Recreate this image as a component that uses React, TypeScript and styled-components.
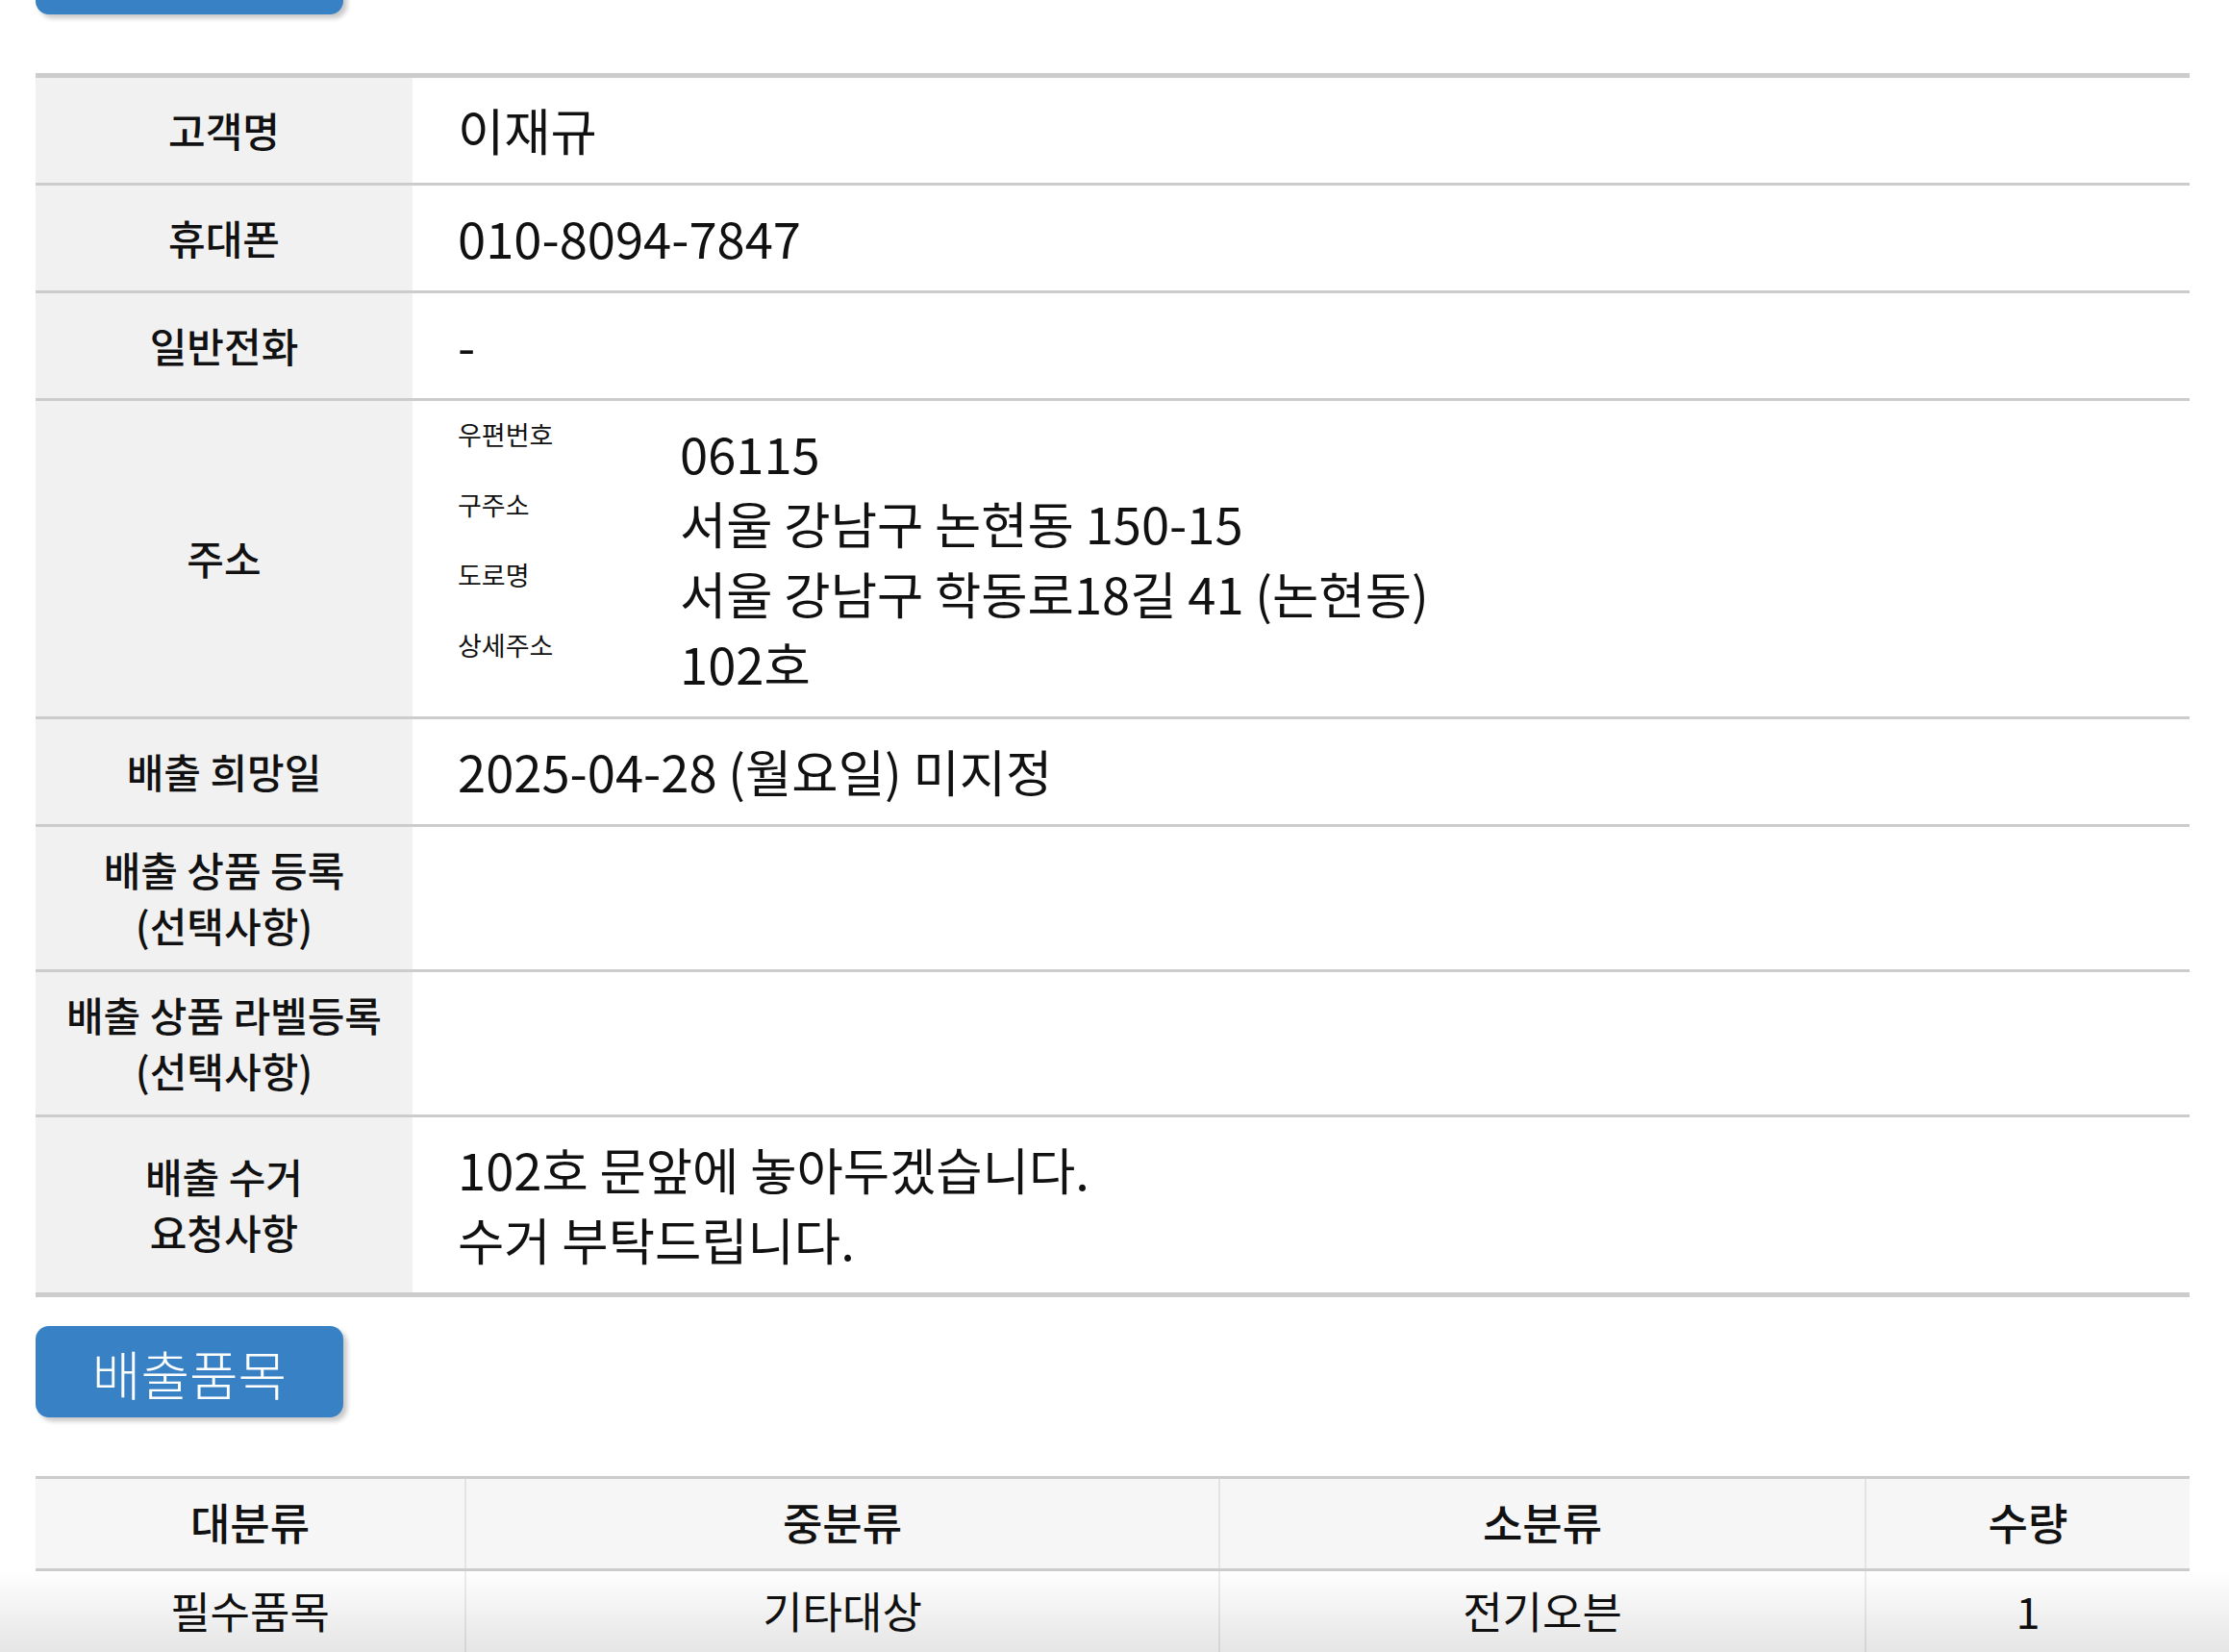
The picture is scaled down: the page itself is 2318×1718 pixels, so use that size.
import React from 'react';
import styled, { createGlobalStyle } from 'styled-components';

const GlobalStyle = createGlobalStyle`
  html, body {
    margin: 0;
    padding: 0;
    height: 100%;
    overflow: hidden;
    background: #fff;
  }
  body {
    font-family: "Noto Sans CJK KR", "Noto Sans", sans-serif;
    color: #111;
  }
`;

const Page = styled.div`
  padding: 0 41px 0 37px;
`;

const SectionTag = styled.div<{ $cut?: boolean }>`
  width: 320px;
  height: 95px;
  margin-top: ${p => (p.$cut ? '-80px' : '30px')};
  margin-bottom: 61px;
  border-radius: 14px;
  background: #3781c4;
  color: #fff;
  display: flex;
  align-items: center;
  justify-content: center;
  font-size: 55px;
  font-weight: 300;
  box-shadow: 4px 4px 5px rgba(0, 0, 0, 0.22);
`;

const InfoTable = styled.div`
  border-top: 5px solid #cccccc;
  border-bottom: 5px solid #cccccc;
`;

const InfoRow = styled.div`
  display: grid;
  grid-template-columns: 392px 1fr;
  border-bottom: 3px solid #cccccc;

  &:last-child {
    border-bottom: none;
  }
`;

const Label = styled.div`
  background: #f1f1f1;
  display: flex;
  align-items: center;
  justify-content: center;
  text-align: center;
  padding: 15px 10px 17px;
  font-size: 42px;
  font-weight: 500;
  line-height: 58px;
`;

const Value = styled.div`
  display: flex;
  flex-direction: column;
  justify-content: center;
  padding: 17px 47px 19px;
  font-size: 52.5px;
  line-height: 73px;
`;

const AddressGrid = styled.div`
  display: grid;
  grid-template-columns: 231px 1fr;
`;

const AddrLabel = styled.div`
  font-size: 27px;
  line-height: 36px;
  align-self: start;
`;

const AddrValue = styled.div`
  font-size: 52.5px;
  line-height: 73px;
`;

const ItemTable = styled.div`
  border-top: 3px solid #cccccc;
`;

const ItemRow = styled.div<{ $head?: boolean }>`
  display: grid;
  grid-template-columns: 20% 35% 30% 15%;
  height: ${p => (p.$head ? '93px' : '88px')};
  background: ${p => (p.$head ? '#f6f6f6' : '#fff')};
  border-bottom: ${p => (p.$head ? '3px solid #cccccc' : 'none')};
`;

const ItemCell = styled.div<{ $head?: boolean }>`
  display: flex;
  align-items: center;
  justify-content: center;
  padding-bottom: ${p => (p.$head ? '4px' : '8px')};
  font-size: 45px;
  font-weight: ${p => (p.$head ? 500 : 400)};
  border-right: 2px solid ${p => (p.$head ? '#e4e4e4' : '#ececec')};

  &:last-child {
    border-right: none;
  }
`;

const BottomFade = styled.div`
  position: fixed;
  left: 0;
  right: 0;
  bottom: 0;
  height: 86px;
  pointer-events: none;
  background: linear-gradient(to bottom, rgba(0, 0, 0, 0), rgba(0, 0, 0, 0.1));
`;

const address = [
  ['우편번호', '06115'],
  ['구주소', '서울 강남구 논현동 150-15'],
  ['도로명', '서울 강남구 학동로18길 41 (논현동)'],
  ['상세주소', '102호'],
];

const items = [['필수품목', '기타대상', '전기오븐', '1']];

export default function App() {
  return (
    <Page>
      <GlobalStyle />
      {/* previous section tag, scrolled mostly out of view */}
      <SectionTag $cut />

      <InfoTable>
        <InfoRow>
          <Label>고객명</Label>
          <Value>이재규</Value>
        </InfoRow>
        <InfoRow>
          <Label>휴대폰</Label>
          <Value>010-8094-7847</Value>
        </InfoRow>
        <InfoRow>
          <Label>일반전화</Label>
          <Value>-</Value>
        </InfoRow>
        <InfoRow>
          <Label>주소</Label>
          <Value>
            <AddressGrid>
              {address.map(([k, v]) => (
                <React.Fragment key={k}>
                  <AddrLabel>{k}</AddrLabel>
                  <AddrValue>{v}</AddrValue>
                </React.Fragment>
              ))}
            </AddressGrid>
          </Value>
        </InfoRow>
        <InfoRow>
          <Label>배출 희망일</Label>
          <Value>2025-04-28 (월요일) 미지정</Value>
        </InfoRow>
        <InfoRow>
          <Label>
            배출 상품 등록
            <br />
            (선택사항)
          </Label>
          <Value />
        </InfoRow>
        <InfoRow>
          <Label>
            배출 상품 라벨등록
            <br />
            (선택사항)
          </Label>
          <Value />
        </InfoRow>
        <InfoRow>
          <Label>
            배출 수거
            <br />
            요청사항
          </Label>
          <Value>
            <div>102호 문앞에 놓아두겠습니다.</div>
            <div>수거 부탁드립니다.</div>
          </Value>
        </InfoRow>
      </InfoTable>

      <SectionTag>배출품목</SectionTag>

      <ItemTable>
        <ItemRow $head>
          {['대분류', '중분류', '소분류', '수량'].map(h => (
            <ItemCell $head key={h}>{h}</ItemCell>
          ))}
        </ItemRow>
        {items.map((row, i) => (
          <ItemRow key={i}>
            {row.map((c, j) => (
              <ItemCell key={j}>{c}</ItemCell>
            ))}
          </ItemRow>
        ))}
      </ItemTable>

      <BottomFade />
    </Page>
  );
}
